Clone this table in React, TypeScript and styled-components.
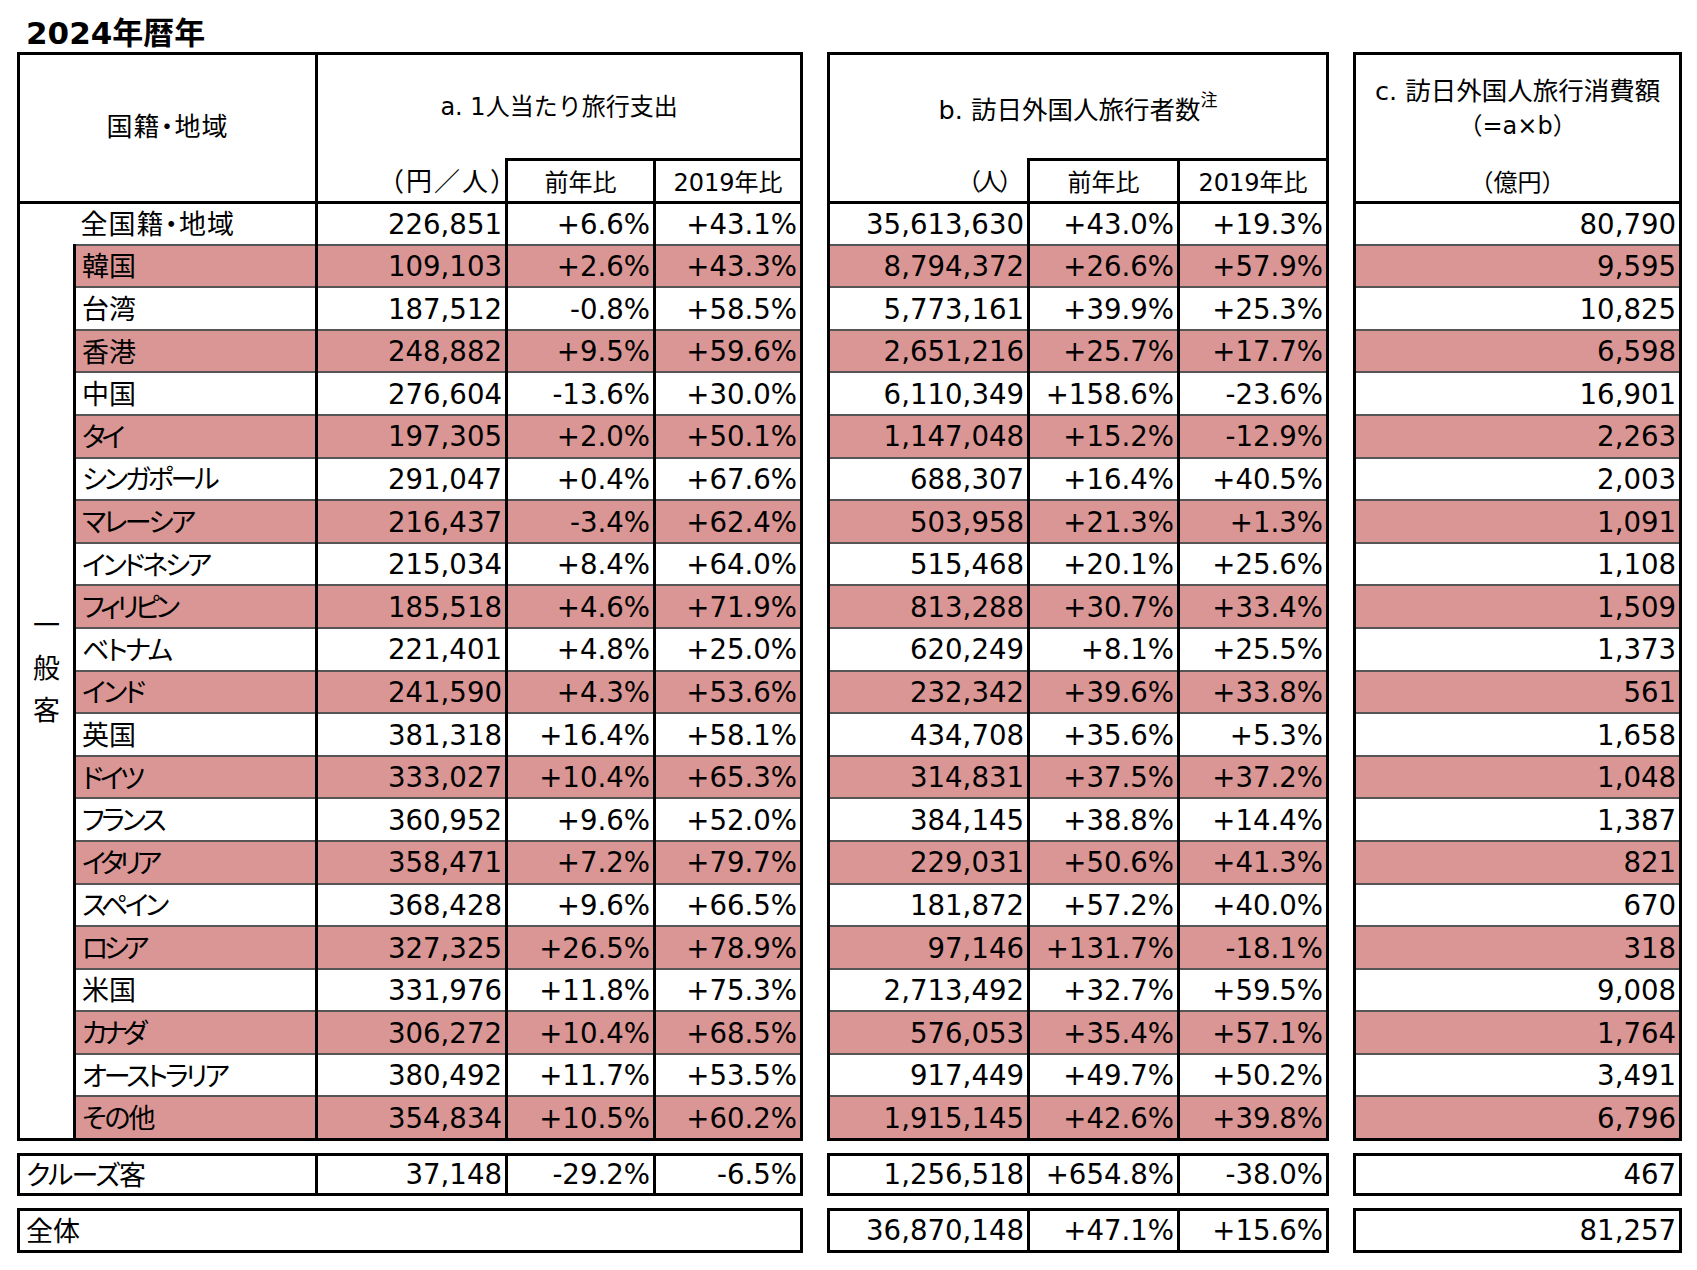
import React from "react";
import styled, { createGlobalStyle } from "styled-components";

const GlobalStyle = createGlobalStyle`
  html, body { margin: 0; padding: 0; background: #fff; }
  body {
    font-family: "DejaVu Sans", "Noto Sans CJK JP", sans-serif;
    color: #000;
  }
`;

const PINK = "#D99694";
const LINE = "#000";
const ROWLINE = "#555";

type Triple = [string, string, string];
type Row = { name: string; a: Triple; b: Triple; c: string; ls?: number };

const total: Row = {
  name: "全国籍・地域",
  a: ["226,851", "+6.6%", "+43.1%"],
  b: ["35,613,630", "+43.0%", "+19.3%"],
  c: "80,790",
  ls: 1,
};

const rows: Row[] = [
  { name: "韓国", a: ["109,103", "+2.6%", "+43.3%"], b: ["8,794,372", "+26.6%", "+57.9%"], c: "9,595" },
  { name: "台湾", a: ["187,512", "-0.8%", "+58.5%"], b: ["5,773,161", "+39.9%", "+25.3%"], c: "10,825" },
  { name: "香港", a: ["248,882", "+9.5%", "+59.6%"], b: ["2,651,216", "+25.7%", "+17.7%"], c: "6,598" },
  { name: "中国", a: ["276,604", "-13.6%", "+30.0%"], b: ["6,110,349", "+158.6%", "-23.6%"], c: "16,901" },
  { name: "タイ", a: ["197,305", "+2.0%", "+50.1%"], b: ["1,147,048", "+15.2%", "-12.9%"], c: "2,263", ls: -4 },
  { name: "シンガポール", a: ["291,047", "+0.4%", "+67.6%"], b: ["688,307", "+16.4%", "+40.5%"], c: "2,003", ls: -3 },
  { name: "マレーシア", a: ["216,437", "-3.4%", "+62.4%"], b: ["503,958", "+21.3%", "+1.3%"], c: "1,091", ls: -2.5 },
  { name: "インドネシア", a: ["215,034", "+8.4%", "+64.0%"], b: ["515,468", "+20.1%", "+25.6%"], c: "1,108", ls: -3 },
  { name: "フィリピン", a: ["185,518", "+4.6%", "+71.9%"], b: ["813,288", "+30.7%", "+33.4%"], c: "1,509", ls: -4 },
  { name: "ベトナム", a: ["221,401", "+4.8%", "+25.0%"], b: ["620,249", "+8.1%", "+25.5%"], c: "1,373", ls: -2.5 },
  { name: "インド", a: ["241,590", "+4.3%", "+53.6%"], b: ["232,342", "+39.6%", "+33.8%"], c: "561", ls: -2.5 },
  { name: "英国", a: ["381,318", "+16.4%", "+58.1%"], b: ["434,708", "+35.6%", "+5.3%"], c: "1,658" },
  { name: "ドイツ", a: ["333,027", "+10.4%", "+65.3%"], b: ["314,831", "+37.5%", "+37.2%"], c: "1,048", ls: -3.5 },
  { name: "フランス", a: ["360,952", "+9.6%", "+52.0%"], b: ["384,145", "+38.8%", "+14.4%"], c: "1,387", ls: -3 },
  { name: "イタリア", a: ["358,471", "+7.2%", "+79.7%"], b: ["229,031", "+50.6%", "+41.3%"], c: "821", ls: -4.5 },
  { name: "スペイン", a: ["368,428", "+9.6%", "+66.5%"], b: ["181,872", "+57.2%", "+40.0%"], c: "670", ls: -3.5 },
  { name: "ロシア", a: ["327,325", "+26.5%", "+78.9%"], b: ["97,146", "+131.7%", "-18.1%"], c: "318", ls: -4.5 },
  { name: "米国", a: ["331,976", "+11.8%", "+75.3%"], b: ["2,713,492", "+32.7%", "+59.5%"], c: "9,008" },
  { name: "カナダ", a: ["306,272", "+10.4%", "+68.5%"], b: ["576,053", "+35.4%", "+57.1%"], c: "1,764", ls: -5 },
  { name: "オーストラリア", a: ["380,492", "+11.7%", "+53.5%"], b: ["917,449", "+49.7%", "+50.2%"], c: "3,491", ls: -3 },
  { name: "その他", a: ["354,834", "+10.5%", "+60.2%"], b: ["1,915,145", "+42.6%", "+39.8%"], c: "6,796", ls: -2 },
];

const cruise = { a: ["37,148", "-29.2%", "-6.5%"], b: ["1,256,518", "+654.8%", "-38.0%"], c: "467" };
const whole = { b: ["36,870,148", "+47.1%", "+15.6%"], c: "81,257" };

const A_COLS = [56, 242, 190, 148, 147];
const B_COLS = [200, 150, 149];
const C_COLS = [326];
const sum = (a: number[]) => a.reduce((x, y) => x + y, 0);

const HEAD1 = 106;
const HEAD2 = 42.5;
const ROW_H = 42.6;

const Page = styled.div`
  width: 1697px;
  height: 1270px;
  box-sizing: border-box;
  padding-left: 17px;
  overflow: hidden;
`;

const Title = styled.h1`
  margin: 0;
  box-sizing: border-box;
  height: 52px;
  padding: 18px 0 0 9px;
  font-family: "DejaVu Sans", "Noto Sans CJK JP", sans-serif;
  font-weight: bold;
  font-size: 31px;
  line-height: 31px;
  white-space: nowrap;
`;

const Sheet = styled.div`
  display: flex;
  align-items: flex-start;
  gap: 24px;
`;

const Section = styled.div`
  display: flex;
  flex-direction: column;
  gap: 12px;
`;

const Table = styled.table<{ $w: number }>`
  width: ${(p) => p.$w}px;
  table-layout: fixed;
  border-collapse: collapse;
  border: 3px solid ${LINE};
`;

const Tr = styled.tr<{ $h: number }>`
  height: ${(p) => p.$h}px;
`;

const Th = styled.th<{
  $align?: "left" | "right" | "center";
  $noTop?: boolean;
  $noBottom?: boolean;
  $size?: number;
  $padTop?: number;
}>`
  font-weight: normal;
  font-size: ${(p) => p.$size ?? 24}px;
  line-height: 34px;
  text-align: ${(p) => p.$align ?? "center"};
  vertical-align: middle;
  padding: ${(p) => p.$padTop ?? 0}px 4px 0 4px;
  border: 3px solid ${LINE};
  ${(p) => (p.$noTop ? "border-top: none;" : "")}
  ${(p) => (p.$noBottom ? "border-bottom: none;" : "")}
  white-space: nowrap;
  overflow: visible;
`;

const RegionHead = styled.span`
  font-size: 26px;
  font-feature-settings: "palt";
  letter-spacing: 1px;
`;

const Unit = styled.span<{ $shift?: number; $size?: number; $ls?: number }>`
  display: inline-block;
  font-size: ${(p) => p.$size ?? 24}px;
  letter-spacing: ${(p) => p.$ls ?? 0}px;
  margin-right: ${(p) => -(p.$shift ?? 0)}px;
`;

const Sup = styled.sup`
  font-size: 17px;
  line-height: 0;
  vertical-align: 13px;
`;

const Num = styled.td<{ $pink?: boolean }>`
  font-size: 27.6px;
  line-height: 1;
  text-align: right;
  vertical-align: middle;
  padding: 2px 3px 0 0;
  border-left: 3px solid ${LINE};
  border-right: 3px solid ${LINE};
  border-bottom: 2px solid ${ROWLINE};
  background: ${(p) => (p.$pink ? PINK : "#fff")};
  white-space: nowrap;
`;

const Label = styled.td<{ $pink?: boolean; $ls?: number; $plain?: boolean }>`
  font-size: 27px;
  line-height: 1;
  font-feature-settings: "palt";
  letter-spacing: ${(p) => p.$ls ?? 0}px;
  text-align: left;
  vertical-align: middle;
  padding: 2px 0 0 6px;
  border-left: ${(p) => (p.$plain ? "none" : `3px solid ${LINE}`)};
  border-right: 3px solid ${LINE};
  border-bottom: 2px solid ${ROWLINE};
  background: ${(p) => (p.$pink ? PINK : "#fff")};
  white-space: nowrap;
`;

const Blank = styled.td`
  border: none;
  padding: 0;
`;

const GroupCell = styled.td`
  border-top: none;
  border-left: 3px solid ${LINE};
  border-right: 3px solid ${LINE};
  border-bottom: 3px solid ${LINE};
  padding: 0 0 44px 0;
  vertical-align: middle;
  background: #fff;
`;

const GroupText = styled.div`
  display: flex;
  flex-direction: column;
  align-items: center;
  font-size: 27px;
  line-height: 42.5px;
`;

const Cols = ({ widths }: { widths: number[] }) => (
  <colgroup>
    {widths.map((w, i) => (
      <col key={i} style={{ width: w }} />
    ))}
  </colgroup>
);

function SectionA() {
  return (
    <Section>
      <Table $w={sum(A_COLS)}>
        <Cols widths={A_COLS} />
        <thead>
          <Tr $h={HEAD1}>
            <Th colSpan={2} rowSpan={2}>
              <RegionHead>国籍・地域</RegionHead>
            </Th>
            <Th colSpan={3} $noBottom>
              a. 1人当たり旅行支出
            </Th>
          </Tr>
          <Tr $h={HEAD2}>
            <Th $align="right" $noTop $padTop={4}>
              <Unit $shift={17} $size={26} $ls={2}>
                （円／人）
              </Unit>
            </Th>
            <Th $padTop={5}>前年比</Th>
            <Th $padTop={5}>2019年比</Th>
          </Tr>
        </thead>
        <tbody>
          <Tr $h={ROW_H}>
            <Blank />
            <Label $plain $ls={total.ls}>
              {total.name}
            </Label>
            {total.a.map((v, i) => (
              <Num key={i}>{v}</Num>
            ))}
          </Tr>
          {rows.map((r, idx) => (
            <Tr $h={ROW_H} key={r.name}>
              {idx === 0 && (
                <GroupCell rowSpan={rows.length}>
                  <GroupText>
                    {"一般客".split("").map((ch) => (
                      <span key={ch}>{ch}</span>
                    ))}
                  </GroupText>
                </GroupCell>
              )}
              <Label $pink={idx % 2 === 0} $ls={r.ls}>
                {r.name}
              </Label>
              {r.a.map((v, i) => (
                <Num key={i} $pink={idx % 2 === 0}>
                  {v}
                </Num>
              ))}
            </Tr>
          ))}
        </tbody>
      </Table>
      <Table $w={sum(A_COLS)}>
        <Cols widths={A_COLS} />
        <tbody>
          <Tr $h={40}>
            <Label colSpan={2} $ls={-1.5}>
              クルーズ客
            </Label>
            {cruise.a.map((v, i) => (
              <Num key={i}>{v}</Num>
            ))}
          </Tr>
        </tbody>
      </Table>
      <Table $w={sum(A_COLS)}>
        <Cols widths={A_COLS} />
        <tbody>
          <Tr $h={42}>
            <Label colSpan={5}>全体</Label>
          </Tr>
        </tbody>
      </Table>
    </Section>
  );
}

function SectionB() {
  return (
    <Section>
      <Table $w={sum(B_COLS)}>
        <Cols widths={B_COLS} />
        <thead>
          <Tr $h={HEAD1}>
            <Th colSpan={3} $noBottom $size={25.5} $padTop={7}>
              b. 訪日外国人旅行者数<Sup>注</Sup>
            </Th>
          </Tr>
          <Tr $h={HEAD2}>
            <Th $align="right" $noTop $padTop={4}>
              <Unit $ls={-3} $shift={-3}>
                （人）
              </Unit>
            </Th>
            <Th $padTop={5}>前年比</Th>
            <Th $padTop={5}>2019年比</Th>
          </Tr>
        </thead>
        <tbody>
          <Tr $h={ROW_H}>
            {total.b.map((v, i) => (
              <Num key={i}>{v}</Num>
            ))}
          </Tr>
          {rows.map((r, idx) => (
            <Tr $h={ROW_H} key={r.name}>
              {r.b.map((v, i) => (
                <Num key={i} $pink={idx % 2 === 0}>
                  {v}
                </Num>
              ))}
            </Tr>
          ))}
        </tbody>
      </Table>
      <Table $w={sum(B_COLS)}>
        <Cols widths={B_COLS} />
        <tbody>
          <Tr $h={40}>
            {cruise.b.map((v, i) => (
              <Num key={i}>{v}</Num>
            ))}
          </Tr>
        </tbody>
      </Table>
      <Table $w={sum(B_COLS)}>
        <Cols widths={B_COLS} />
        <tbody>
          <Tr $h={42}>
            {whole.b.map((v, i) => (
              <Num key={i}>{v}</Num>
            ))}
          </Tr>
        </tbody>
      </Table>
    </Section>
  );
}

function SectionC() {
  return (
    <Section>
      <Table $w={sum(C_COLS)}>
        <Cols widths={C_COLS} />
        <thead>
          <Tr $h={HEAD1}>
            <Th $noBottom $size={25.5} $padTop={2}>
              c. 訪日外国人旅行消費額
              <br />
              <Unit>（=a×b）</Unit>
            </Th>
          </Tr>
          <Tr $h={HEAD2}>
            <Th $noTop $padTop={5}>
              （億円）
            </Th>
          </Tr>
        </thead>
        <tbody>
          <Tr $h={ROW_H}>
            <Num>{total.c}</Num>
          </Tr>
          {rows.map((r, idx) => (
            <Tr $h={ROW_H} key={r.name}>
              <Num $pink={idx % 2 === 0}>{r.c}</Num>
            </Tr>
          ))}
        </tbody>
      </Table>
      <Table $w={sum(C_COLS)}>
        <Cols widths={C_COLS} />
        <tbody>
          <Tr $h={40}>
            <Num>{cruise.c}</Num>
          </Tr>
        </tbody>
      </Table>
      <Table $w={sum(C_COLS)}>
        <Cols widths={C_COLS} />
        <tbody>
          <Tr $h={42}>
            <Num>{whole.c}</Num>
          </Tr>
        </tbody>
      </Table>
    </Section>
  );
}

export default function App() {
  return (
    <>
      <GlobalStyle />
      <Page>
        <Title>2024年暦年</Title>
        <Sheet>
          <SectionA />
          <SectionB />
          <SectionC />
        </Sheet>
      </Page>
    </>
  );
}
